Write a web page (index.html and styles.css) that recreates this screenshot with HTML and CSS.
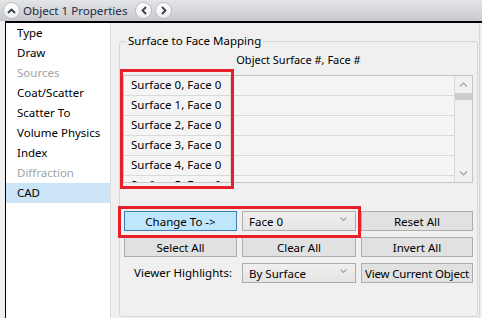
FILE: index.html
```html
<!DOCTYPE html>
<html lang="en">
  <head>
    <meta charset="UTF-8" />
    <title>Object 1 Properties</title>
    <link rel="stylesheet" href="styles.css">
  </head>
  <body>
    <div class="titlebar">
      <span class="round">
        <svg width="9" height="6" viewBox="0 0 9 6"><path d="M1 5 L4.5 1.5 L8 5" /></svg>
      </span>
      <span class="title">Object 1 Properties</span>
      <span class="round">
        <svg width="6" height="9" viewBox="0 0 6 9"><path d="M5 1 L1.5 4.5 L5 8" /></svg>
      </span>
      <span class="round">
        <svg width="6" height="9" viewBox="0 0 6 9"><path d="M1 1 L4.5 4.5 L1 8" /></svg>
      </span>
    </div>

    <div class="window">
      <div class="frame">
        <ul class="nav">
          <li>Type</li>
          <li>Draw</li>
          <li class="disabled">Sources</li>
          <li>Coat/Scatter</li>
          <li>Scatter To</li>
          <li>Volume Physics</li>
          <li>Index</li>
          <li class="disabled">Diffraction</li>
          <li class="selected">CAD</li>
        </ul>

        <div class="main">
          <fieldset class="group">
            <legend>Surface to Face Mapping</legend>
            <div class="caption">Object Surface #, Face #</div>

            <div class="listbox">
              <div class="rows">
                <div class="row"><span class="cell">Surface 0, Face 0</span><span class="cell wide"></span></div>
                <div class="row"><span class="cell">Surface 1, Face 0</span><span class="cell wide"></span></div>
                <div class="row"><span class="cell">Surface 2, Face 0</span><span class="cell wide"></span></div>
                <div class="row"><span class="cell">Surface 3, Face 0</span><span class="cell wide"></span></div>
                <div class="row"><span class="cell">Surface 4, Face 0</span><span class="cell wide"></span></div>
                <div class="row"><span class="cell">Surface 5, Face 0</span><span class="cell wide"></span></div>
              </div>
              <div class="scrollbar">
                <svg class="arrow" width="9" height="5" viewBox="0 0 9 5"><path d="M1 4.5 L4.5 1 L8 4.5" /></svg>
                <div class="thumb"></div>
                <div class="track"></div>
                <svg class="arrow" width="9" height="5" viewBox="0 0 9 5"><path d="M1 0.5 L4.5 4 L8 0.5" /></svg>
              </div>
            </div>

            <div class="controls">
              <button class="btn active">Change To -&gt;</button>
              <div class="combo">Face 0
                <svg width="7" height="4" viewBox="0 0 7 4"><path d="M0.5 0.5 L3.5 3.5 L6.5 0.5" /></svg>
              </div>
              <button class="btn">Reset All</button>

              <button class="btn">Select All</button>
              <button class="btn">Clear All</button>
              <button class="btn">Invert All</button>

              <label class="label">Viewer Highlights:</label>
              <div class="combo">By Surface
                <svg width="7" height="4" viewBox="0 0 7 4"><path d="M0.5 0.5 L3.5 3.5 L6.5 0.5" /></svg>
              </div>
              <button class="btn tight">View Current Object</button>
            </div>
          </fieldset>
        </div>
      </div>
    </div>

    <div class="mark mark-list"></div>
    <div class="mark mark-change"></div>
  </body>
</html>
```

FILE: styles.css
```css
body {
  margin: 0;
  width: 482px;
  height: 318px;
  overflow: hidden;
  background: #f0f0f0;
  font-family: "Noto Sans", "Open Sans", sans-serif;
  font-size: 11px;
  color: #000;
  position: relative;
}

/* title bar */

.titlebar {
  height: 21px;
  display: flex;
  align-items: center;
  padding-left: 3px;
  gap: 3px;
  background: linear-gradient(#e4e5e7, #c6c8cb);
}

.title {
  font-size: 11.6px;
  color: #1b2a48;
  margin: 0 5px 0 0;
}

.round {
  width: 15px;
  height: 15px;
  border-radius: 50%;
  border: 1px solid #b9bcc1;
  background: linear-gradient(#ffffff, #eceef0);
  display: flex;
  align-items: center;
  justify-content: center;
}

.round path {
  fill: none;
  stroke: #3a3d42;
  stroke-width: 1.8;
}

/* frame */

.window {
  padding-left: 5px;
  height: 297px;
}

.frame {
  display: flex;
  height: 295px;
  padding-right: 2px;
  border-top: 2px solid #000;
  border-left: 1px solid #000;
}

.nav {
  list-style: none;
  margin: 0;
  padding: 0;
  width: 104px;
  background: #fff;
  border-right: 1px solid #dcdcdc;
}

.nav li {
  height: 20px;
  line-height: 20px;
  padding-left: 11px;
  font-size: 11.5px;
}

.nav li.disabled {
  color: #a3a3a3;
}

.nav li.selected {
  background: #cce4f7;
}

.main {
  flex: 1;
  padding: 10px 1px 0 8px;
  border-right: 1px solid #d6d6d6;
}

/* group box */

.group {
  margin: 0;
  padding: 3px 0 0 0;
  height: 284px;
  border: 1px solid #d5d5d5;
  border-radius: 3px;
  box-sizing: border-box;
}

.group legend {
  margin-left: 6px;
  padding: 0 2px;
  font-size: 11.5px;
  line-height: 16px;
}

.caption {
  text-align: center;
  line-height: 16px;
}

.listbox {
  margin: 7px 4px 0 3px;
  height: 106px;
  border: 1px solid #c5c5c5;
  display: flex;
  overflow: hidden;
}

.rows {
  flex: 1;
}

.row {
  display: flex;
  height: 19px;
  border-bottom: 1px solid #d9d9d9;
  background: #f5f5f5;
}

.cell {
  width: 99px;
  line-height: 17px;
  padding-left: 6px;
  border-left: 1px solid #fff;
  border-right: 1px solid #d9d9d9;
  font-size: 11.5px;
}

.cell.wide {
  flex: 1;
}

.scrollbar {
  width: 17px;
  background: #f0f0f0;
  display: flex;
  flex-direction: column;
  align-items: center;
}

.scrollbar .arrow {
  margin: 6px 0;
}

.scrollbar path,
.combo path {
  fill: none;
  stroke: #a0a0a0;
  stroke-width: 1.1;
}

.thumb {
  width: 17px;
  height: 7px;
  background: #cdcdcd;
}

.track {
  flex: 1;
}

/* buttons */

.controls {
  margin: 28px 3px 0 4px;
  display: grid;
  grid-template-columns: 113px 114px 112px;
  grid-auto-rows: 20px;
  column-gap: 5px;
  row-gap: 6px;
}

.btn {
  margin: 0;
  padding: 0;
  font-family: inherit;
  font-size: 11.5px;
  color: #000;
  background: #e1e1e1;
  border: 1px solid #adadad;
}

.btn.active {
  background: #bee6fd;
  border-color: #3c7fb1;
}

.btn.tight {
  letter-spacing: -0.2px;
}

.combo {
  display: flex;
  align-items: center;
  justify-content: space-between;
  padding: 0 8px 0 6px;
  background: linear-gradient(#efefef, #e5e5e5);
  border: 1px solid #acacac;
  font-size: 11.5px;
}

.combo svg {
  margin-top: -4px;
}

.label {
  text-align: right;
  padding-right: 5px;
  line-height: 20px;
  font-size: 11.5px;
}

/* annotation boxes */

.mark {
  position: absolute;
  border: 3px solid #e8202a;
  box-sizing: border-box;
}

.mark-list {
  left: 120px;
  top: 69px;
  width: 114px;
  height: 120px;
}

.mark-change {
  left: 118px;
  top: 206px;
  width: 243px;
  height: 32px;
}
```
